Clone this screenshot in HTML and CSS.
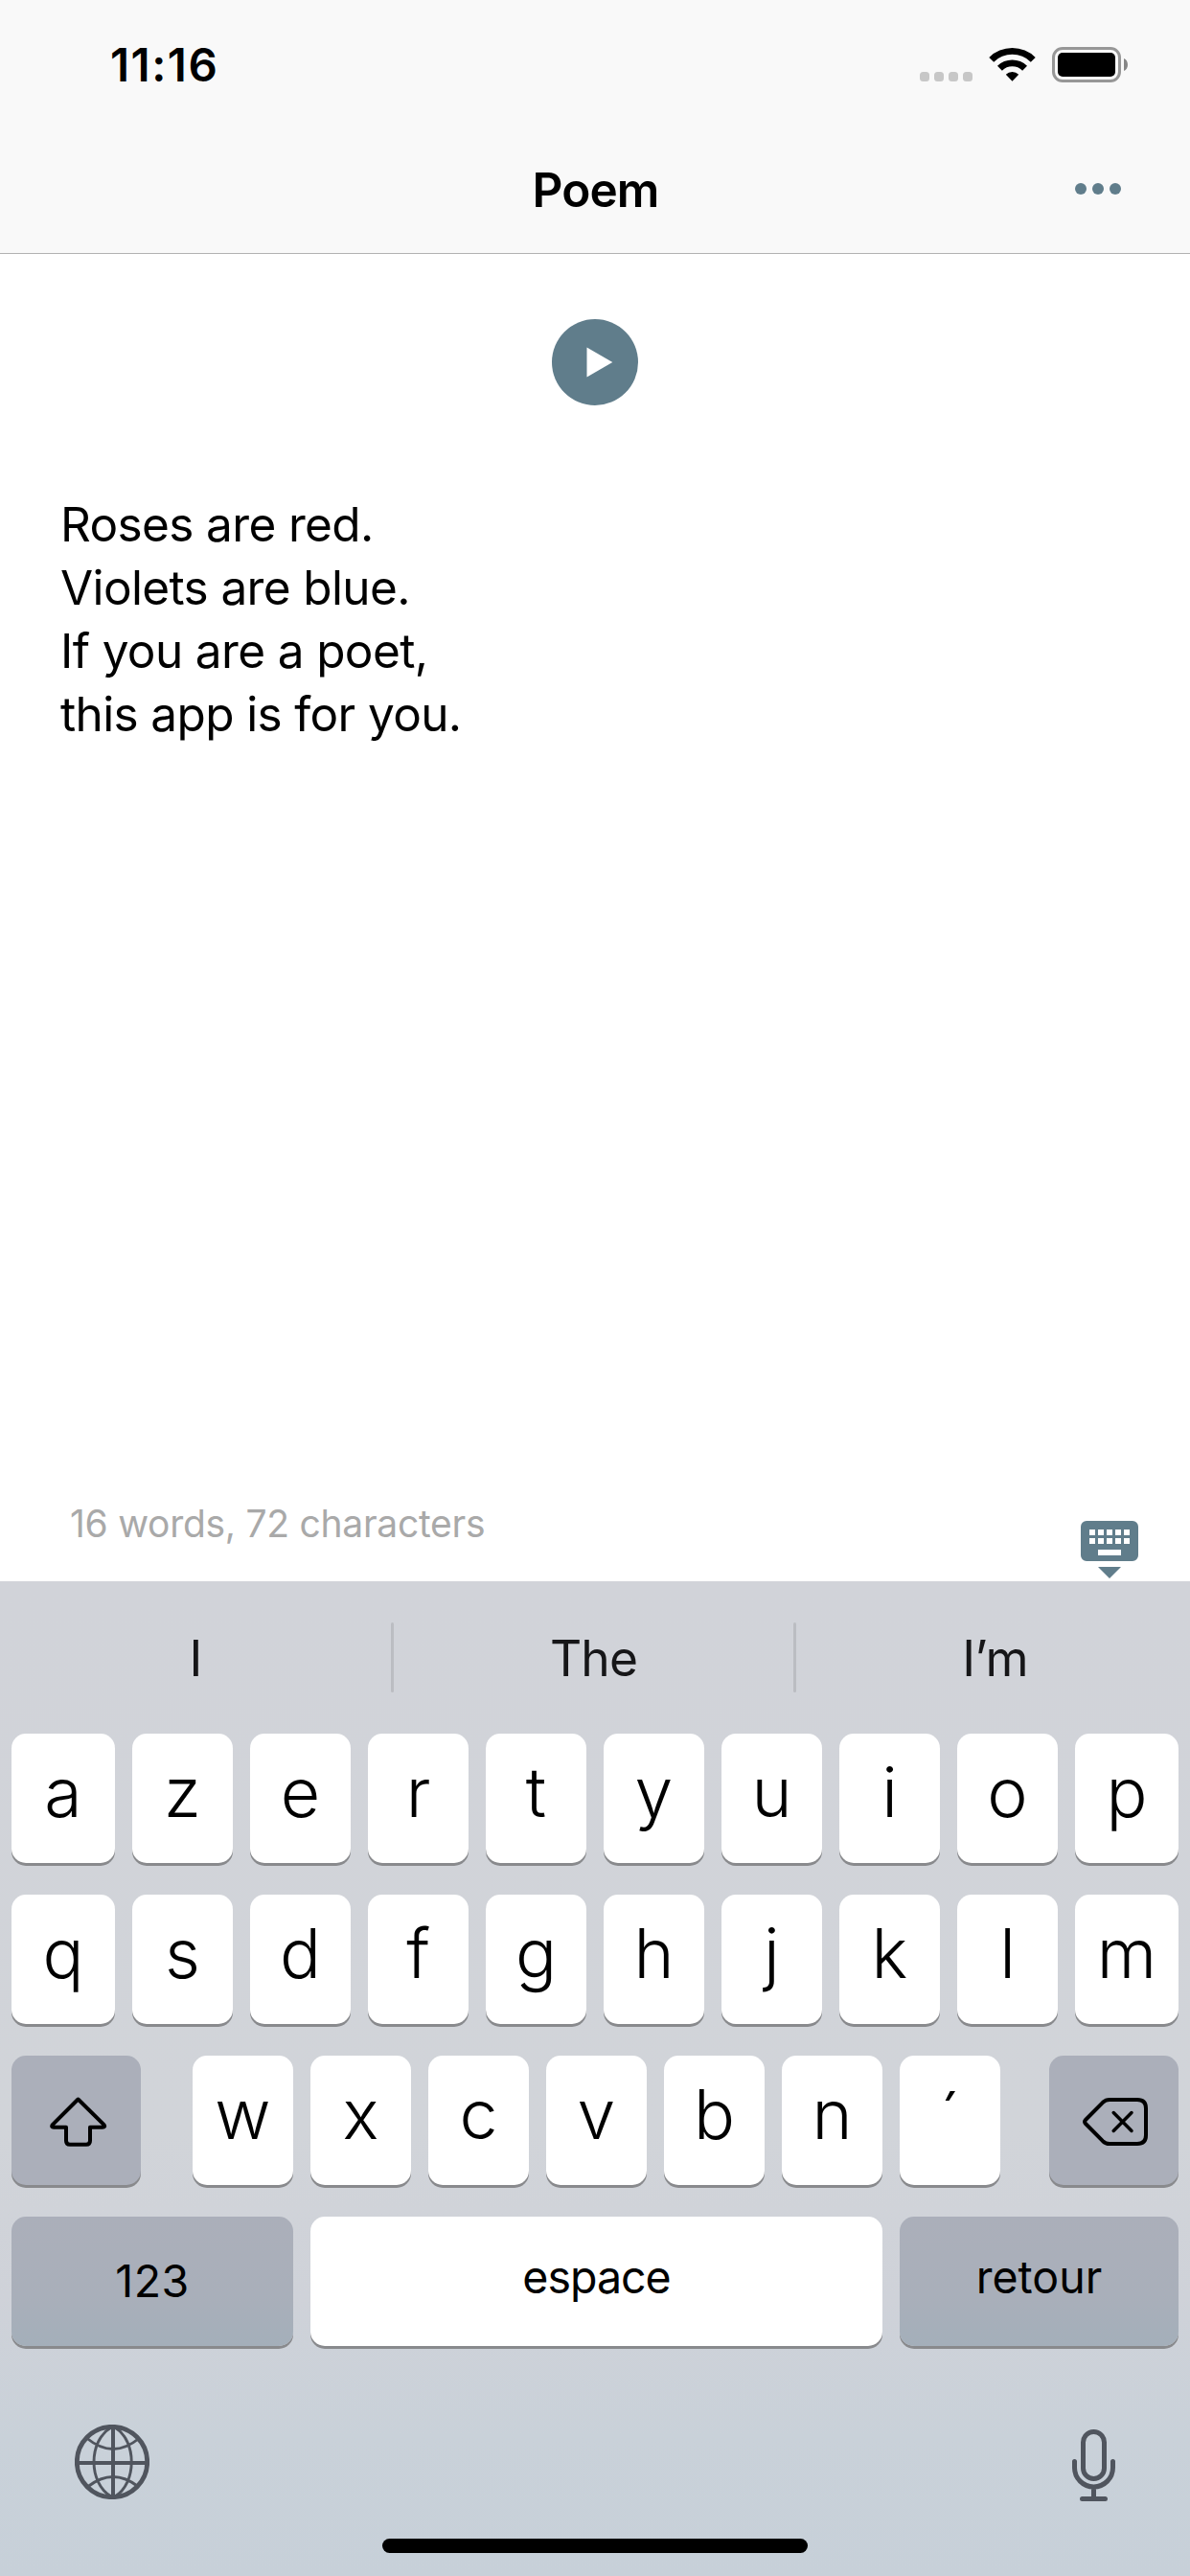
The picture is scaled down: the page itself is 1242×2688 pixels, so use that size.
FILE: index.html
```html
<!DOCTYPE html>
<html lang="en">
<head>
<meta charset="utf-8">
<title>Poem</title>
<link rel="stylesheet" href="styles.css">
</head>
<body>
<div class="screen">
  <header class="header">
    <div class="status">
      <span class="time">11:16</span>
      <div class="status-icons">
        <svg class="signal" width="55" height="37" viewBox="0 0 55 37"><g fill="#c7c7c7"><rect y="26" width="10" height="10" rx="3.5"/><rect x="15" y="26" width="10" height="10" rx="3.5"/><rect x="30" y="26" width="10" height="10" rx="3.5"/><rect x="45" y="26" width="10" height="10" rx="3.5"/></g></svg>
        <svg class="wifi" width="49" height="37" viewBox="0 0 49 37"><path d="M0.3 10.9A34.5 34.5 0 0 1 48.7 10.9L43.8 15.7A27.6 27.6 0 0 0 5.2 15.7ZM9 19.8A22 22 0 0 1 40 19.8L35.1 24.7A15.1 15.1 0 0 0 13.9 24.7ZM17.8 28.8A9.6 9.6 0 0 1 31.2 28.8L24.5 35.8Z"/></svg>
        <svg class="battery" width="79" height="37" viewBox="0 0 79 37"><rect x="1.5" y="1.5" width="69" height="34" rx="9.5" fill="none" stroke="#979797" stroke-width="3"/><rect x="6" y="6" width="60" height="25" rx="5"/><path d="M75 12C80.300 14 80.300 23 75 25Z" fill="#868686"/></svg>
      </div>
    </div>
    <div class="nav">
      <h1 class="title">Poem</h1>
      <svg class="more" width="48" height="12" viewBox="0 0 48 12"><g fill="#607d8b"><circle cx="6" cy="6" r="6"/><circle cx="24" cy="6" r="6"/><circle cx="42" cy="6" r="6"/></g></svg>
    </div>
  </header>
  <main class="editor">
    <svg class="play" width="90" height="90" viewBox="0 0 90 90"><circle cx="45" cy="45" r="45" fill="#607d8b"/><path d="M36.500 29.500L63.300 45L36.500 60.500Z" fill="#fff"/></svg>
    <div class="poem">
      <div class="line">Roses are red.</div>
      <div class="line">Violets are blue.</div>
      <div class="line">If you are a poet,</div>
      <div class="line">this app is for you.</div>
    </div>
    <div class="footer">
      <span class="count">16 words, 72 characters</span>
      <svg class="hide-kb" width="60" height="60" viewBox="0 0 60 60"><path fill="#607d8b" fill-rule="evenodd" d="M6 0H54A6 6 0 0 1 60 6V36A6 6 0 0 1 54 42H6A6 6 0 0 1 0 36V6A6 6 0 0 1 6 0ZM9 9V15H15V9ZM18 9V15H24V9ZM27 9V15H33V9ZM36 9V15H42V9ZM45 9V15H51V9ZM9 18V24H15V18ZM18 18V24H24V18ZM27 18V24H33V18ZM36 18V24H42V18ZM45 18V24H51V18ZM18 30V36H42V30ZM18 48H42L30 60Z"/></svg>
    </div>
  </main>
  <section class="keyboard">
    <div class="suggest"><span>I</span><i></i><span>The</span><i></i><span class="last">I’m</span></div>
    <div class="rows">
      <div class="row ten"><b>a</b><b>z</b><b>e</b><b>r</b><b>t</b><b>y</b><b>u</b><b>i</b><b>o</b><b>p</b></div>
      <div class="row ten"><b>q</b><b>s</b><b>d</b><b>f</b><b>g</b><b>h</b><b>j</b><b>k</b><b>l</b><b>m</b></div>
      <div class="row mid">
        <b class="dark shift"><svg width="60" height="52" viewBox="0 0 60 52"><path d="M29.500 2.500L2.800 29.200Q1.200 31.700 4 31.700H17V45.700Q17 49.700 21 49.700H38Q42 49.700 42 45.700V31.700H55Q58.300 31.700 56.500 29.200Z" fill="none" stroke="#000" stroke-width="4" stroke-linejoin="round"/></svg></b>
        <div class="letters"><b>w</b><b>x</b><b>c</b><b>v</b><b>b</b><b>n</b><b class="accent">´</b></div>
        <b class="dark back"><svg width="68" height="50" viewBox="0 0 68 50"><g fill="none" stroke="#000" stroke-width="4" stroke-linecap="round" stroke-linejoin="round"><path d="M3 23L21 4.800Q24 2 28 2H57Q66 2 66 11V39Q66 48 57 48H28Q24 48 21 45.200L3 27Q1 25 3 23Z"/><path d="M32.200 15.500L51 34.500M51 15.500L32.200 34.500" stroke-width="3.500"/></g></svg></b>
      </div>
      <div class="row bottom"><b class="dark word num">123</b><b class="word space">espace</b><b class="dark word ret">retour</b></div>
    </div>
    <div class="dock">
      <svg class="globe" width="78" height="78" viewBox="0 0 78 78"><g fill="none" stroke="#50555e"><circle cx="39" cy="39" r="36.700" stroke-width="4.800"/><path d="M40 2V76M2 40H76" stroke-width="4"/><path d="M38 3C14 17 14 61 38 75M42 3C65 17 65 61 42 75M13 14.500Q40 36.500 67 14.500M14 64.500Q40 44.500 66 64.500" stroke-width="2.900"/></g></svg>
      <svg class="mic" width="45" height="75" viewBox="0 0 45 75"><g fill="none" stroke="#50555e" stroke-width="5" stroke-linecap="round"><rect x="11.500" y="2.500" width="22" height="49" rx="11"/><path d="M2.500 33.500V40A20 20 0 0 0 42.500 40V33.500M22.500 60.500V71M10.500 72.500H34.500"/></g></svg>
    </div>
    <div class="home"></div>
  </section>
</div>
</body>
</html>
```
FILE: styles.css
```css
* { box-sizing: border-box; }
body { margin: 0; background: #fff; color: #000; font-family: Inter, "Liberation Sans", sans-serif; }
svg { display: block; flex: none; }
.screen { width: 1242px; height: 2688px; display: flex; flex-direction: column; overflow: hidden; }

.header { height: 265px; background: #f9f9f9; border-bottom: 1px solid #b2b2b2; }
.status { height: 135px; padding: 0 65px 0 115px; display: flex; align-items: center; justify-content: space-between; }
.time { font-size: 47.500px; font-weight: 600; letter-spacing: 1.500px; line-height: 60px; }
.status-icons { display: flex; }
.wifi { margin-left: 17px; }
.battery { margin-left: 17px; }
.nav { height: 124px; padding: 0 72px; display: grid; grid-template-columns: 1fr auto 1fr; align-items: center; }
.title { grid-column: 2; margin: 2px 0 0 1px; font-size: 49.500px; font-weight: 600; letter-spacing: -0.900px; line-height: 60px; }
.more { justify-self: end; }

.editor { height: 1385px; display: flex; flex-direction: column; }
.play { margin: 68px auto 0; }
.poem { margin: 91px 0 0 63px; font-size: 49.500px; line-height: 66px; white-space: nowrap; }
.line { letter-spacing: -0.630px; }
.footer { margin-top: auto; padding: 0 54px 3px 73px; display: flex; align-items: flex-end; justify-content: space-between; }
.count { font-size: 39px; line-height: 50px; letter-spacing: -0.280px; color: #a9a9a9; padding-bottom: 32px; }

.keyboard { flex: 1; display: flex; flex-direction: column; background: linear-gradient(#d1d3d9 0, #d1d4d9 55%, #cfd2d9 72%, #c9d1d9 86%, #c7d0d9 100%); }
.suggest { height: 159px; display: grid; grid-template-columns: 408px 3px 417px 3px 411px; align-items: center; font-size: 51.500px; line-height: 66px; letter-spacing: -0.900px; color: #161618; }
.suggest span { text-align: center; }
.suggest .last { padding-left: 4px; }
.suggest i { height: 73px; border-radius: 2px; background: #bbbdc2; }
.rows { padding: 0 12px; display: flex; flex-direction: column; gap: 33px; }
.row { height: 135px; display: grid; gap: 18px; }
.ten { grid-template-columns: 108px repeat(8, 105px) 108px; }
.mid { grid-template-columns: 135px 843px 135px; gap: 0; }
.mid { grid-template-columns: 189px 894px 135px; }
.letters { display: grid; grid-template-columns: repeat(7, 105px); gap: 18px; }
.bottom { grid-template-columns: 294px 597px 291px; }
.row b { height: 135px; border-radius: 15px; background: #fff; box-shadow: 0 3px 0 #898a8d; display: flex; justify-content: center; font-size: 71.500px; font-weight: 340; line-height: 122px; }
.row b.dark { background: #abafba; align-items: center; }
.row b.shift { width: 135px; }
.row b.accent { line-height: 130px; }
.row b.word { font-size: 46.500px; font-weight: 400; line-height: 126px; align-items: flex-start; }
.row b.space { letter-spacing: -1px; }
.bottom b.dark { background: linear-gradient(#abafba, #a9afba 60%, #a4afba); }
.row b.num { line-height: 134px; letter-spacing: 0.500px; }
.shift svg { margin: 3px 0 0 4px; }
.back svg { margin-left: 2px; margin-top: 3px; }
.dock { margin-top: 82px; padding: 0 78px; display: flex; justify-content: space-between; }
.mic { margin-top: 5px; }
.home { width: 444px; height: 15px; margin: 39px auto 0; border-radius: 8px; background: #000; }
```
